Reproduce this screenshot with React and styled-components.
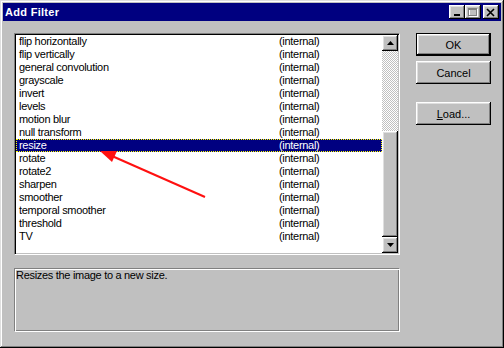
import styled, { createGlobalStyle } from "styled-components";

const GlobalStyle = createGlobalStyle`
  html, body { margin: 0; padding: 0; background: #c0c0c0; }
  body {
    font-family: "Liberation Sans", Arial, sans-serif;
    font-size: 11px;
    -webkit-font-smoothing: none;
  }
`;

const filters = [
  "flip horizontally",
  "flip vertically",
  "general convolution",
  "grayscale",
  "invert",
  "levels",
  "motion blur",
  "null transform",
  "resize",
  "rotate",
  "rotate2",
  "sharpen",
  "smoother",
  "temporal smoother",
  "threshold",
  "TV",
];

const raised = `
  box-shadow: inset -1px -1px 0 #000, inset 1px 1px 0 #fff,
    inset -2px -2px 0 #808080, inset 2px 2px 0 #dfdfdf;
`;

const Window = styled.div`
  position: relative;
  box-sizing: border-box;
  width: 504px;
  height: 348px;
  padding: 3px;
  background: #c0c0c0;
  box-shadow: inset -1px -1px 0 #000, inset 1px 1px 0 #dfdfdf,
    inset -2px -2px 0 #808080, inset 2px 2px 0 #fff;
  display: flex;
  flex-direction: column;
  overflow: hidden;
`;

const TitleBar = styled.div`
  height: 18px;
  background: #000080;
  display: flex;
  align-items: center;
  justify-content: space-between;
  padding: 0 2px 0 2px;
`;

const TitleText = styled.div`
  color: #fff;
  font-weight: bold;
  font-size: 11px;
  letter-spacing: 0.3px;
`;

const CaptionButtons = styled.div`
  display: flex;
  align-items: center;
`;

const CaptionButton = styled.div`
  width: 16px;
  height: 14px;
  box-sizing: border-box;
  background: #c0c0c0;
  margin-left: ${(p) => p.$gap || 0}px;
  display: flex;
  align-items: center;
  justify-content: center;
  ${raised}
`;

const Body = styled.div`
  flex: 1;
  display: flex;
  gap: 16px;
  padding: 12px 0 0 11px;
`;

const LeftColumn = styled.div`
  width: 386px;
  display: flex;
  flex-direction: column;
  gap: 13px;
`;

const ListBox = styled.div`
  box-sizing: border-box;
  height: 222px;
  display: flex;
  background: #fff;
  border-top: 1px solid #808080;
  border-left: 1px solid #808080;
  border-bottom: 1px solid #fff;
  border-right: 1px solid #fff;
  box-shadow: inset 1px 1px 0 #000, inset -1px -1px 0 #c0c0c0;
  padding: 1px;
`;

const Rows = styled.div`
  flex: 1;
  overflow: hidden;
`;

const Row = styled.div`
  box-sizing: border-box;
  height: 13px;
  line-height: 13px;
  display: grid;
  grid-template-columns: 260px 1fr;
  padding-left: 3px;
  letter-spacing: -0.3px;
  white-space: nowrap;
  color: ${(p) => (p.$selected ? "#fff" : "#000")};
  background: ${(p) => (p.$selected ? "#000080" : "transparent")};
  outline: ${(p) => (p.$selected ? "1px dotted #ffff00" : "none")};
  outline-offset: -1px;
`;

const ScrollBar = styled.div`
  width: 16px;
  display: flex;
  flex-direction: column;
`;

const ScrollButton = styled.div`
  width: 16px;
  height: 16px;
  box-sizing: border-box;
  background: #c0c0c0;
  display: flex;
  align-items: center;
  justify-content: center;
  ${raised}
`;

const Track = styled.div`
  flex: 1;
  display: flex;
  flex-direction: column;
  justify-content: flex-end;
  background-color: #fff;
  background-image: conic-gradient(#c0c0c0 25%, #fff 0 50%, #c0c0c0 0 75%, #fff 0);
  background-size: 2px 2px;
`;

const Thumb = styled.div`
  height: 106px;
  background: #c0c0c0;
  ${raised}
`;

const Description = styled.div`
  box-sizing: border-box;
  height: 64px;
  line-height: 13px;
  padding: 0 1px;
  letter-spacing: -0.3px;
  border-top: 1px solid #808080;
  border-left: 1px solid #808080;
  border-bottom: 1px solid #fff;
  border-right: 1px solid #fff;
  box-shadow: inset 1px 1px 0 #fff, inset -1px -1px 0 #808080;
`;

const ButtonColumn = styled.div`
  width: 75px;
  display: flex;
  flex-direction: column;
`;

const Button = styled.div`
  box-sizing: border-box;
  height: 23px;
  margin-top: ${(p) => p.$gap || 0}px;
  display: flex;
  align-items: center;
  justify-content: center;
  background: #c0c0c0;
  color: #000;
  ${(p) =>
    p.$default
      ? `border: 1px solid #000;
         box-shadow: inset -1px -1px 0 #000, inset 1px 1px 0 #fff,
           inset -2px -2px 0 #808080, inset 2px 2px 0 #dfdfdf;`
      : raised}
`;

const Overlay = styled.svg`
  position: absolute;
  left: 0;
  top: 0;
  pointer-events: none;
`;

function Triangle({ down }) {
  return (
    <svg width="7" height="4" viewBox="0 0 7 4">
      <polygon points={down ? "0,0 7,0 3.5,4" : "3.5,0 7,4 0,4"} fill="#000" />
    </svg>
  );
}

export default function App() {
  return (
    <>
      <GlobalStyle />
      <Window>
        <TitleBar>
          <TitleText>Add Filter</TitleText>
          <CaptionButtons>
            <CaptionButton>
              <svg width="10" height="9" viewBox="0 0 10 9">
                <rect x="2" y="6" width="6" height="2" fill="#000" />
              </svg>
            </CaptionButton>
            <CaptionButton>
              <svg width="10" height="9" viewBox="0 0 10 9">
                <rect x="1.5" y="1.5" width="8" height="7" fill="none" stroke="#fff" />
                <rect x="0.5" y="0.5" width="8" height="7" fill="none" stroke="#808080" />
                <rect x="0" y="0" width="9" height="2" fill="#808080" />
              </svg>
            </CaptionButton>
            <CaptionButton $gap={2}>
              <svg width="10" height="9" viewBox="0 0 10 9">
                <path d="M1 1 L8 8 M8 1 L1 8" stroke="#000" strokeWidth="1.6" />
              </svg>
            </CaptionButton>
          </CaptionButtons>
        </TitleBar>
        <Body>
          <LeftColumn>
            <ListBox>
              <Rows>
                {filters.map((name) => (
                  <Row key={name} $selected={name === "resize"}>
                    <span>{name}</span>
                    <span>(internal)</span>
                  </Row>
                ))}
              </Rows>
              <ScrollBar>
                <ScrollButton>
                  <Triangle />
                </ScrollButton>
                <Track>
                  <Thumb />
                </Track>
                <ScrollButton>
                  <Triangle down />
                </ScrollButton>
              </ScrollBar>
            </ListBox>
            <Description>Resizes the image to a new size.</Description>
          </LeftColumn>
          <ButtonColumn>
            <Button $default>OK</Button>
            <Button $gap={5}>Cancel</Button>
            <Button $gap={18}>
              <span>
                <u>L</u>oad...
              </span>
            </Button>
          </ButtonColumn>
        </Body>
        <Overlay width="504" height="348" viewBox="0 0 504 348">
          <line x1="205" y1="197" x2="112" y2="156" stroke="#ff1010" strokeWidth="2" />
          <polygon points="100,151 117,151 112,162" fill="#ff1010" />
        </Overlay>
      </Window>
    </>
  );
}
